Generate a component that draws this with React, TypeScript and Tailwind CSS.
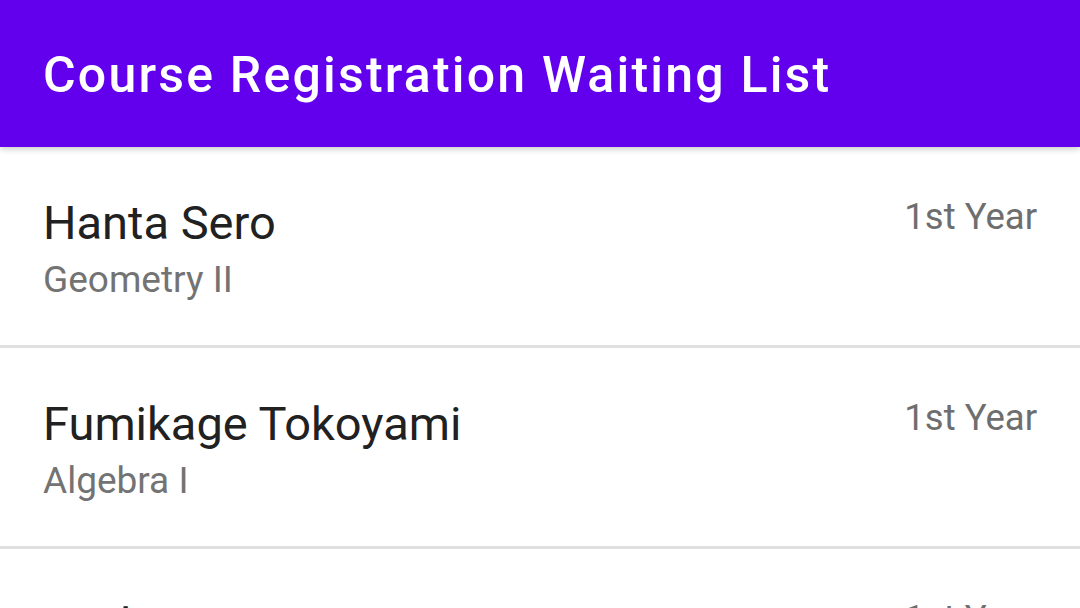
import React from 'react';

type Student = {
  name: string;
  course: string;
  year: string;
};

const students: Student[] = [
  { name: 'Hanta Sero', course: 'Geometry II', year: '1st Year' },
  { name: 'Fumikage Tokoyami', course: 'Algebra I', year: '1st Year' },
  { name: 'Kyoka Jiro', course: 'Calculus I', year: '1st Year' },
];

const StudentRow: React.FC<{ student: Student }> = ({ student }) => (
  <li className="h-[201px] shrink-0 border-b-[3px] border-[#e0e0e0] px-[43px] pt-[48px] flex items-start justify-between">
    <div className="flex flex-col">
      <span className="text-[47px] leading-[56px] text-[#212121]">{student.name}</span>
      <span className="mt-[7px] text-[37px] leading-[44px] text-[#737373]">{student.course}</span>
    </div>
    <span className="text-[36.5px] leading-[44px] text-[#6e6e6e]">{student.year}</span>
  </li>
);

const App: React.FC = () => {
  return (
    <div className="w-[1080px] h-[608px] overflow-hidden bg-white flex flex-col font-['Roboto',sans-serif]">
      <header className="relative z-10 h-[147px] shrink-0 bg-[#6200ee] px-[43px] flex items-center shadow-[0_2px_6px_rgba(0,0,0,0.22)]">
        <h1 className="mt-[3px] text-[50px] leading-[58px] tracking-[2.2px] font-medium text-white">Course Registration Waiting List</h1>
      </header>
      <ul className="flex flex-col">
        {students.map((s) => (
          <StudentRow key={s.name} student={s} />
        ))}
      </ul>
    </div>
  );
};

export default App;
